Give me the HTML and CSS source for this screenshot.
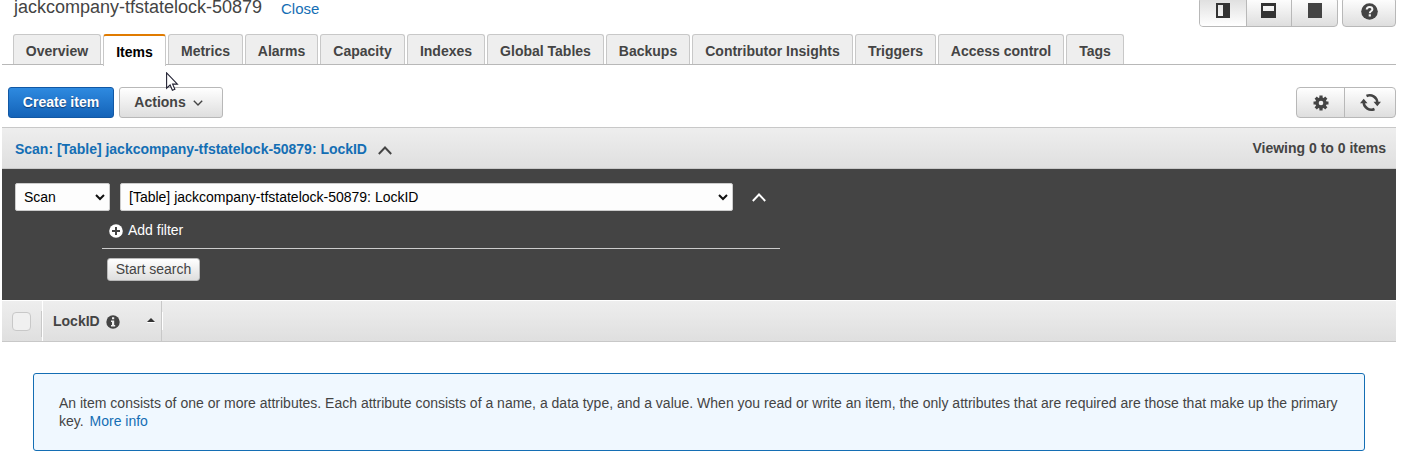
FILE: index.html
```html
<!DOCTYPE html>
<html lang="en">
<head>
<meta charset="utf-8">
<title>Items</title>
<link rel="stylesheet" href="styles.css">
</head>
<body>
<div class="page">
  <header class="header">
    <h1 class="title">jackcompany-tfstatelock-50879</h1>
    <a class="close">Close</a>
    <div class="group layout-group">
      <button class="cell pressed"><svg width="14" height="15" viewBox="0 0 14 15"><path d="M0 0h14v15H0zM2 2v11h5V2z" fill="#333" fill-rule="evenodd"/></svg></button>
      <button class="cell"><svg width="15" height="15" viewBox="0 0 15 15"><path d="M0 0h15v15H0zM2 3v5h11V3z" fill="#333" fill-rule="evenodd"/></svg></button>
      <button class="cell"><svg width="14" height="15" viewBox="0 0 14 15"><path d="M0 0h14v15H0z" fill="#444"/></svg></button>
    </div>
    <div class="group help-group">
      <button class="cell"><svg width="17" height="17" viewBox="0 0 17 17"><circle cx="8.5" cy="8.5" r="8.3" fill="#444"/><path d="M5.7 6.5C5.8 4.6 7 3.9 8.5 3.9c1.700 0 2.900.9 2.900 2.400 0 2-2.600 1.900-2.600 3.900" fill="none" stroke="#f4f4f4" stroke-width="2"/><path d="M7.700 11.300h2.200v2.200H7.700z" fill="#f4f4f4"/></svg></button>
    </div>
  </header>

  <nav class="tabs">
    <a class="tab w-overview">Overview</a>
    <a class="tab active w-items">Items</a>
    <a class="tab w-metrics">Metrics</a>
    <a class="tab w-alarms">Alarms</a>
    <a class="tab w-capacity">Capacity</a>
    <a class="tab w-indexes">Indexes</a>
    <a class="tab w-global">Global Tables</a>
    <a class="tab w-backups">Backups</a>
    <a class="tab w-insights">Contributor Insights</a>
    <a class="tab w-triggers">Triggers</a>
    <a class="tab w-access">Access control</a>
    <a class="tab w-tags">Tags</a>
  </nav>

  <div class="toolbar">
    <button class="btn primary">Create item</button>
    <button class="btn actions">Actions<svg width="10" height="6" viewBox="0 0 10 6"><path d="M.8.700 5 4.900 9.200.700" fill="none" stroke="#444" stroke-width="1.400"/></svg></button>
    <div class="group tool-group">
      <button class="cell gear"><svg width="16" height="16" viewBox="0 0 16 16"><g fill="#444"><path d="M6.400.500h3.200v15H6.400zM.500 6.400h15v3.200H.500z"/><path d="M6.400.500h3.200v15H6.400zM.500 6.400h15v3.200H.500z" transform="rotate(45 8 8)"/><circle cx="8" cy="8" r="5.700"/></g><circle cx="8" cy="8" r="2.300" fill="#f0f0f0"/></svg></button>
      <button class="cell refresh"><svg width="21" height="19" viewBox="0 0 21 19"><g fill="none" stroke="#444" stroke-width="2.500"><path d="M6.500 3A7.600 7.600 0 0 1 17.300 9.500"/><path d="M14.500 16A7.600 7.600 0 0 1 3.700 9.500"/></g><path d="M13.500 8.700H21l-3.700 4.600zM0 10.300h7.500L3.700 5.700z" fill="#444"/></svg></button>
    </div>
  </div>

  <div class="scanbar">
    <span class="scan-title">Scan: [Table] jackcompany-tfstatelock-50879: LockID</span>
    <svg width="14" height="9" viewBox="0 0 14 9"><path d="M.8 8 7 1.500 13.200 8" fill="none" stroke="#444" stroke-width="1.900"/></svg>
    <span class="viewing">Viewing 0 to 0 items</span>
  </div>

  <section class="query">
    <div class="selects">
      <div class="select mode"><span>Scan</span><svg width="10" height="7" viewBox="0 0 10 7"><path d="M1 1 5 5 9 1" fill="none" stroke="#111" stroke-width="2"/></svg></div>
      <div class="select target"><span>[Table] jackcompany-tfstatelock-50879: LockID</span><svg width="10" height="7" viewBox="0 0 10 7"><path d="M1 1 5 5 9 1" fill="none" stroke="#111" stroke-width="2"/></svg></div>
      <svg class="collapse" width="14" height="9" viewBox="0 0 14 9"><path d="M.8 8 7 1.500 13.200 8" fill="none" stroke="#fff" stroke-width="1.900"/></svg>
    </div>
    <div class="filter"><svg width="14" height="14" viewBox="0 0 14 14"><circle cx="7" cy="7" r="6.800" fill="#fff"/><path d="M7 3v8M3 7h8" stroke="#444" stroke-width="2"/></svg><span>Add filter</span></div>
    <button class="search">Start search</button>
  </section>

  <div class="columns">
    <div class="check-col"><span class="checkbox"></span><span class="divider"></span></div>
    <div class="lock-col">
      <span>LockID</span>
      <svg class="info" width="14" height="14" viewBox="0 0 14 14"><circle cx="7" cy="7" r="6.700" fill="#444"/><path d="M6 2.300h2.200v2H6zM5 5.500h3.200v4.400h1v1.500H5V9.900h1V7H5z" fill="#eee"/></svg>
      <svg class="sort" width="8" height="5" viewBox="0 0 8 5"><path d="M0 4 4 0l4 4z" fill="#333"/><path d="M0 4h8v1H0z" fill="#fff"/></svg>
    </div>
    <span class="col-edge"></span>
  </div>

  <div class="notice"><p>An item consists of one or more attributes. Each attribute consists of a name, a data type, and a value. When you read or write an item, the only attributes that are required are those that make up the primary<br>key. <a>More info</a></p></div>
</div>
<svg class="pointer" width="13" height="20" viewBox="0 0 13 20"><path d="M.6.900v15.300l3.500-3.200 2.300 5.300 2.500-1-2.300-5.200h4.800z" fill="#fff" stroke="#223" stroke-width="1.100"/></svg>
</body>
</html>
```
FILE: styles.css
```css
* { box-sizing: border-box; }
body {
  margin: 0;
  height: 475px;
  overflow: hidden;
  background: #fff;
  color: #444;
  font: 14px/18px "Liberation Sans", Arial, sans-serif;
}
svg { display: block; flex: none; }
button { font: inherit; color: inherit; padding: 0; margin: 0; border: 0; background: none; }
.page { width: 1394px; margin-left: 2px; }

.header { display: flex; align-items: flex-start; height: 34px; padding-left: 12px; }
.title { margin: -4px 0 0; width: 267px; font-size: 18px; line-height: 22px; font-weight: 400; white-space: nowrap; }
.close { color: #146eb4; font-size: 15px; line-height: 18px; }
.group {
  display: flex;
  border: 1px solid #b8b8b8;
  border-radius: 4px;
  background: linear-gradient(#fff, #dedede);
  overflow: hidden;
}
.cell { display: flex; align-items: center; justify-content: center; }
.cell + .cell { border-left: 1px solid #b8b8b8; }
.layout-group { width: 139px; height: 30px; margin: -3px 4px 0 auto; }
.layout-group .cell { width: 46px; padding-bottom: 3px; }
.layout-group .pressed { background: linear-gradient(#dedede, #fff); }
.help-group { width: 54px; height: 30px; margin-top: -3px; }
.help-group .cell { width: 52px; padding-bottom: 1px; }

.tabs { display: flex; gap: 2px; height: 31px; padding-left: 11px; border-bottom: 1px solid #b8b8b8; }
.tab {
  height: 30px;
  border: 1px solid #c8c8c8;
  border-bottom: 0;
  border-radius: 3px 3px 0 0;
  background: #eee;
  font-weight: 700;
  line-height: 32px;
  text-align: center;
  white-space: nowrap;
}
.tab.active { height: 32px; border-top: 2px solid #e07b00; background: #fff; color: #000; }
.w-overview { width: 88px; }
.w-items { width: 63px; }
.w-metrics { width: 75px; }
.w-alarms { width: 73px; }
.w-capacity { width: 85px; }
.w-indexes { width: 78px; }
.w-global { width: 117px; }
.w-backups { width: 84px; }
.w-insights { width: 161px; }
.w-triggers { width: 81px; }
.w-access { width: 126px; }
.w-tags { width: 58px; }

.toolbar { display: flex; height: 62px; padding: 22px 0 0 6px; }
.btn {
  display: flex;
  align-items: center;
  justify-content: center;
  height: 31px;
  padding-bottom: 2px;
  border: 1px solid #b8b8b8;
  border-radius: 3px;
  background: linear-gradient(#fff, #dedede);
  font-weight: 700;
}
.primary { width: 106px; margin-right: 5px; border-color: #1258a4; background: linear-gradient(#2e8ae0, #1463b8); color: #fff; text-shadow: 0 1px 1px #123c70; }
.actions { width: 104px; gap: 7px; padding-right: 5px; }
.actions svg { margin-top: 3px; }
.tool-group { width: 100px; height: 31px; margin-left: auto; }
.gear { width: 47px; }
.refresh { width: 51px; }

.scanbar {
  display: flex;
  align-items: center;
  height: 42px;
  padding: 2px 10px 0 13px;
  border-top: 1px solid #c8c8c8;
  border-bottom: 1px solid #c8c8c8;
  background: linear-gradient(#eee, #dfdfdf);
  font-weight: 700;
}
.scan-title { width: 363px; color: #146eb4; white-space: nowrap; letter-spacing: -0.02px; }
.scanbar svg { margin-top: 3px; }
.viewing { margin: -2px 0 0 auto; }

.query { height: 131px; padding: 14px 13px 0; background: #444; }
.selects { display: flex; height: 28px; }
.select {
  display: flex;
  align-items: center;
  justify-content: space-between;
  height: 28px;
  padding: 0 4px 0 8px;
  border: 1px solid #ccc;
  border-radius: 2px;
  background: #fdfdfd;
  color: #000;
}
.mode { width: 95px; margin-right: 10px; }
.target { width: 613px; }
.collapse { margin: 10px 0 0 19px; }
.filter { display: flex; align-items: center; gap: 5px; width: 678px; height: 38px; margin-left: 87px; padding: 1px 0 0 7px; border-bottom: 1px solid #ccc; color: #fff; }
.filter svg { margin-top: 2px; }
.search { display: block; width: 93px; height: 23px; margin: 9px 0 0 92px; padding-bottom: 2px; border: 1px solid #b8b8b8; border-radius: 3px; background: linear-gradient(#fff, #dedede); }

.columns { display: flex; height: 42px; border-top: 1px solid #fff; border-bottom: 1px solid #c8c8c8; background: linear-gradient(#eee, #dfdfdf); }
.check-col { display: flex; align-items: center; justify-content: space-between; width: 41px; padding-left: 10px; border-right: 1px solid #fff; }
.checkbox { width: 19px; height: 19px; border: 1px solid #c8c8c8; border-radius: 4px; background: #f0f0f0; }
.divider { width: 1px; height: 26px; margin-top: 6px; background: #c8c8c8; }
.lock-col { display: flex; align-items: center; width: 119px; padding: 0 6px 0 10px; border-right: 1px solid #c8c8c8; font-weight: 700; }
.info { margin: 1px 0 0 6px; }
.sort { margin: -1px 0 0 auto; }
.col-edge { width: 1px; height: 18px; margin-top: 11px; background: #fff; }

.notice { width: 1332px; height: 78px; margin: 31px 0 0 31px; padding: 20px 25px 0; border: 1px solid #146eb4; border-radius: 3px; background: #f0f8ff; }
.notice p { margin: 0; white-space: nowrap; }
.notice a { margin-left: 2px; color: #146eb4; }
.pointer { position: absolute; left: 166px; top: 72px; }
```
